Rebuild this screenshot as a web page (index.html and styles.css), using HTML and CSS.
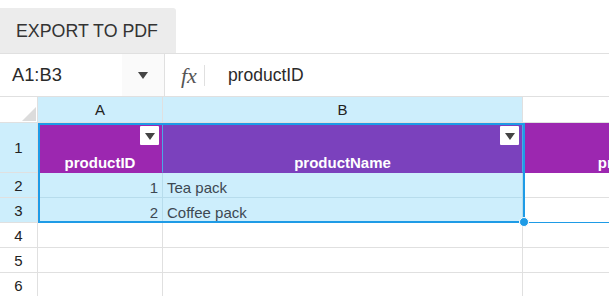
FILE: index.html
```html
<!DOCTYPE html>
<html lang="en">

<head>
    <meta charset="UTF-8">
    <meta name="viewport" content="width=device-width, initial-scale=1.0">
    <title>Spreadsheet</title>
    <link rel="stylesheet" href="styles.css">
</head>

<body>
    <div class="toolbar">
        <button class="btn-export">EXPORT TO PDF</button>
    </div>

    <div class="formula-bar">
        <div class="name-box">A1:B3</div>
        <div class="name-drop"><span class="caret"></span></div>
        <div class="fx">fx</div>
        <div class="formula">productID</div>
    </div>

    <div class="sheet">
        <!-- column headers -->
        <div class="cell corner"></div>
        <div class="cell col-head sel">A</div>
        <div class="cell col-head sel">B</div>
        <div class="cell col-head"></div>

        <!-- row 1 -->
        <div class="cell row-head sel tall">1</div>
        <div class="cell th th-a">productID<span class="filter"></span></div>
        <div class="cell th th-b">productName<span class="filter"></span></div>
        <div class="cell th th-c">productPrice</div>

        <!-- row 2 -->
        <div class="cell row-head sel">2</div>
        <div class="cell data num">1</div>
        <div class="cell data">Tea pack</div>
        <div class="cell"></div>

        <!-- row 3 -->
        <div class="cell row-head sel">3</div>
        <div class="cell data num">2</div>
        <div class="cell data">Coffee pack</div>
        <div class="cell edge"></div>

        <div class="cell row-head">4</div>
        <div class="cell"></div>
        <div class="cell"></div>
        <div class="cell"></div>

        <div class="cell row-head">5</div>
        <div class="cell"></div>
        <div class="cell"></div>
        <div class="cell"></div>

        <div class="cell row-head">6</div>
        <div class="cell"></div>
        <div class="cell"></div>
        <div class="cell"></div>

        <!-- selected range A1:B3 -->
        <div class="selection"><span class="handle"></span></div>
    </div>
</body>

</html>
```

FILE: styles.css
```css
* {
    margin: 0;
    padding: 0;
    box-sizing: border-box;
}

body {
    width: 609px;
    height: 296px;
    overflow: hidden;
    background: #fff;
    font-family: "Liberation Sans", Arial, sans-serif;
    color: #333;
}

/* 顶部工具栏 */
.toolbar {
    height: 54px;
    padding-top: 8px;
    border-bottom: 1px solid #e0e0e0;
}

.btn-export {
    display: block;
    width: 176px;
    height: 45px;
    padding-left: 16px;
    padding-top: 2px;
    text-align: left;
    border: none;
    border-radius: 0 3px 0 0;
    background: #ececec;
    font-family: inherit;
    font-size: 17.8px;
    color: #333;
}

/* 公式栏 */
.formula-bar {
    display: flex;
    height: 43px;
    border-bottom: 1px solid #e0e0e0;
    align-items: center;
}

.name-box {
    width: 122px;
    height: 100%;
    padding-left: 12px;
    display: flex;
    align-items: center;
    font-size: 18.3px;
    color: #2a2a2a;
}

.name-drop {
    width: 43px;
    height: 100%;
    display: flex;
    align-items: center;
    justify-content: center;
    background: #fafafa;
    border-right: 1px solid #e0e0e0;
}

.caret {
    width: 0;
    height: 0;
    border-left: 5px solid transparent;
    border-right: 5px solid transparent;
    border-top: 7px solid #444;
}

.fx {
    margin-left: 16px;
    padding-right: 7px;
    border-right: 1px solid #e0e0e0;
    font-family: "Liberation Serif", "Times New Roman", serif;
    font-style: italic;
    font-size: 22px;
    line-height: 21px;
    color: #555;
}

.formula {
    margin-left: 23px;
    font-size: 17.5px;
    color: #2a2a2a;
}

/* 表格区域 */
.sheet {
    position: relative;
    display: grid;
    grid-template-columns: 38px 125px 360px 242px;
    grid-template-rows: 26px 50px repeat(5, 25px);
    overflow: hidden;
}

.cell {
    position: relative;
    border-right: 1px solid #e0e0e0;
    border-bottom: 1px solid #e0e0e0;
    font-size: 15px;
    white-space: nowrap;
    overflow: hidden;
}

.corner::after {
    content: "";
    position: absolute;
    right: 1px;
    bottom: 1px;
    border-left: 14px solid transparent;
    border-bottom: 14px solid #dcdcdc;
}

.col-head {
    display: flex;
    align-items: center;
    justify-content: center;
    font-size: 15px;
    color: #222;
}

.row-head {
    display: flex;
    align-items: center;
    justify-content: center;
    font-size: 15px;
    color: #222;
}

.sel {
    background: #cdeefc;
}

/* 表头行 */
.th {
    display: flex;
    align-items: flex-end;
    justify-content: center;
    padding-bottom: 1px;
    font-size: 15px;
    font-weight: bold;
    color: #fff;
    border-right-color: #4aa8e6;
    border-bottom-color: #9c27b0;
}

.th-a,
.th-c {
    background: #9c27b0;
}

.th-b {
    background: #7b41bd;
    border-bottom-color: #7b41bd;
}

.th-c {
    border-right: none;
}

.filter {
    position: absolute;
    top: 3px;
    right: 3px;
    width: 19px;
    height: 19px;
    background: #fff;
    border-radius: 1px;
}

.filter::after {
    content: "";
    position: absolute;
    left: 5px;
    top: 7px;
    border-left: 5px solid transparent;
    border-right: 5px solid transparent;
    border-top: 7px solid #444;
}

.data {
    display: flex;
    align-items: flex-end;
    padding: 0 4px 1px;
    background: #cdeefc;
    border-color: #b7dcec;
    color: #3d4852;
}

.num {
    justify-content: flex-end;
}

.edge {
    border-bottom-color: #1e9be6;
}

/* 选区 */
.selection {
    position: absolute;
    left: 38px;
    top: 26px;
    width: 487px;
    height: 100px;
    border: 2px solid #1e9be6;
    pointer-events: none;
}

.handle {
    position: absolute;
    right: -6px;
    bottom: -6px;
    width: 10px;
    height: 10px;
    border-radius: 50%;
    background: #1e9be6;
    border: 1px solid #fff;
}
```
